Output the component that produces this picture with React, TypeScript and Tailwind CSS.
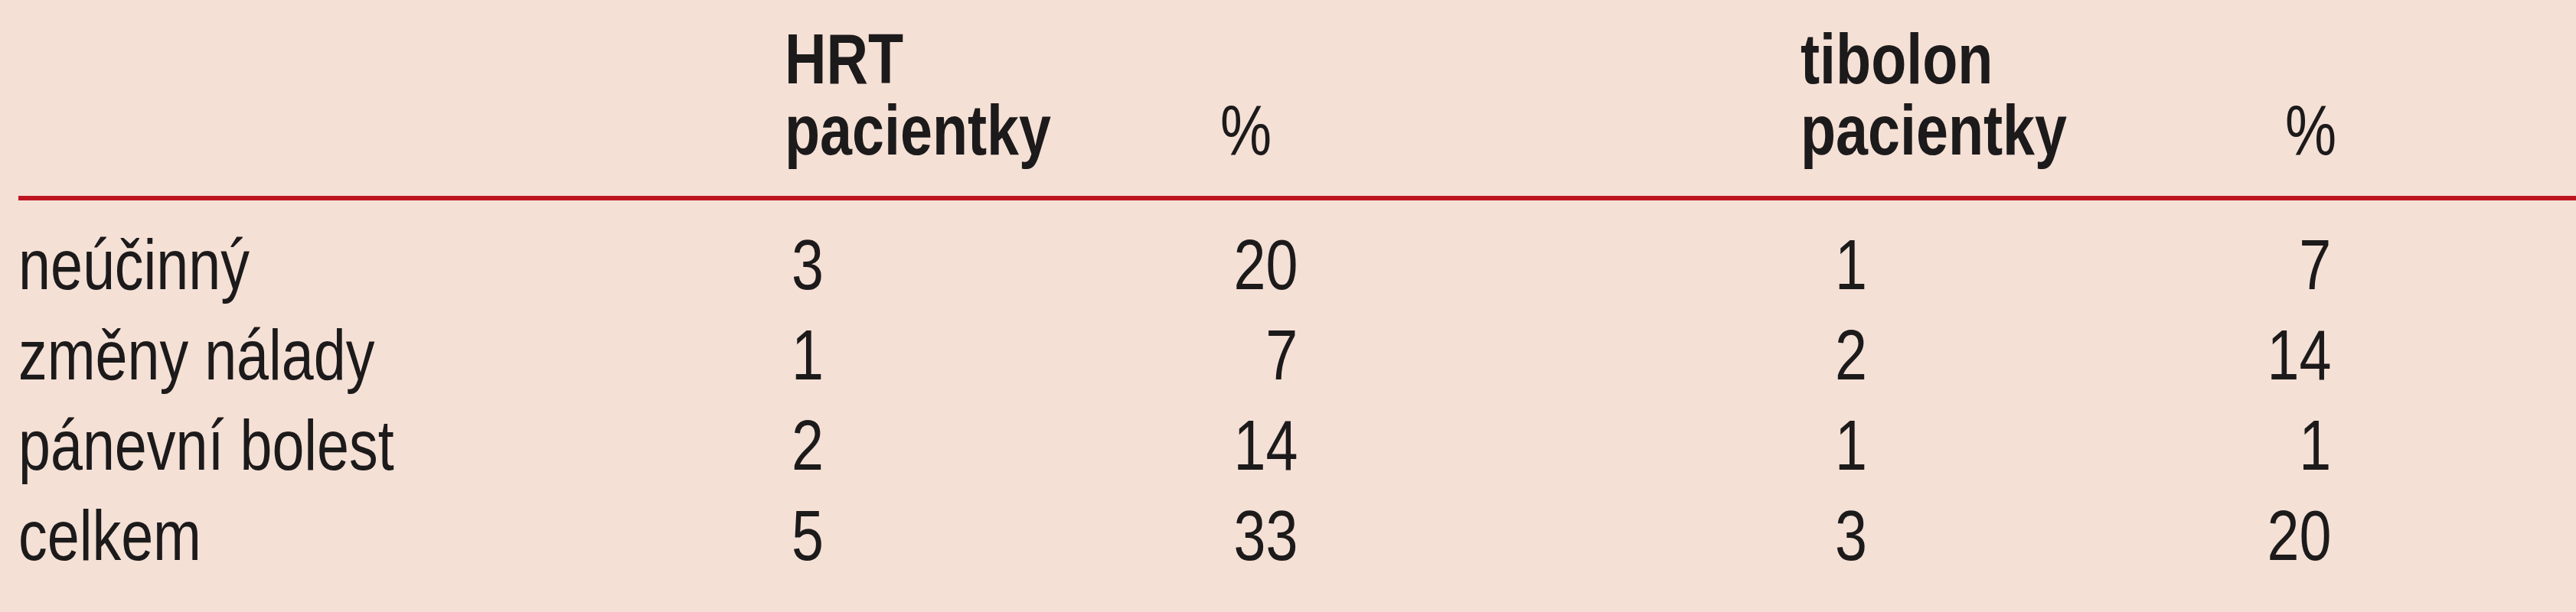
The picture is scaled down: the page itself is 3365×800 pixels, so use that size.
import React from "react";

const rows: [string, string, string, string, string][] = [
  ["neúčinný", "3", "20", "1", "7"],
  ["změny nálady", "1", "7", "2", "14"],
  ["pánevní bolest", "2", "14", "1", "1"],
  ["celkem", "5", "33", "3", "20"],
];

const font = { fontFamily: '"Liberation Sans", Arial, sans-serif' };

function L({ children }: { children: React.ReactNode }) {
  return <span className="inline-block origin-left scale-x-[0.82] whitespace-nowrap">{children}</span>;
}

function R({ children }: { children: React.ReactNode }) {
  return <span className="inline-block shrink-0 origin-right scale-x-[0.82] whitespace-nowrap">{children}</span>;
}

export default function App() {
  return (
    <div
      className="h-[800px] w-full overflow-hidden bg-[#f5e0d6] pl-[24px] text-[92px] text-[#1c1a1a]"
      style={font}
    >
      <div className="grid grid-cols-[1001px_569px_758px_633px_1fr] pt-[31px] font-bold leading-[93px]">
        <div />
        <div>
          <div><L>HRT</L></div>
          <div><L>pacientky</L></div>
        </div>
        <div className="flex flex-col justify-end font-normal"><div><L>%</L></div></div>
        <div>
          <div><L>tibolon</L></div>
          <div><L>pacientky</L></div>
        </div>
        <div className="flex flex-col justify-end font-normal"><div><L>%</L></div></div>
      </div>
      <div className="mt-[39px] h-[6px] bg-[#bd1520]" />
      <div className="pt-[25px] leading-[118px]">
        {rows.map((r) => (
          <div key={r[0]} className="grid grid-cols-[1001px_569px_758px_633px_1fr]">
            <div><L>{r[0]}</L></div>
            <div className="pl-[9px]"><L>{r[1]}</L></div>
            <div className="flex w-[101px] justify-end"><R>{r[2]}</R></div>
            <div className="pl-[45px]"><L>{r[3]}</L></div>
            <div className="flex w-[60px] justify-end"><R>{r[4]}</R></div>
          </div>
        ))}
      </div>
    </div>
  );
}
